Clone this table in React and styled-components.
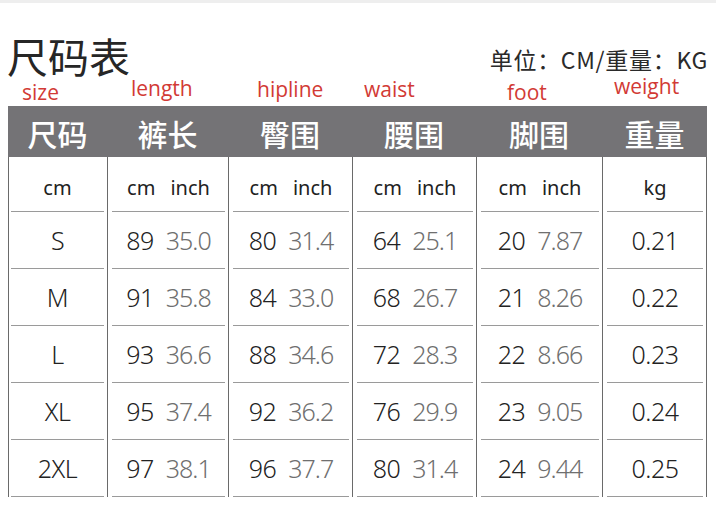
import React from "react";
import styled, { createGlobalStyle } from "styled-components";

const COLS = "99px 121px 124px 124px 126px 105px";

const heads = ["尺码", "裤长", "臀围", "腰围", "脚围", "重量"];

// label text, left padding inside its column, offset from row top
const labels = [
  { text: "size", left: 14, top: 6 },
  { text: "length", left: 24, top: 2 },
  { text: "hipline", left: 29, top: 3 },
  { text: "waist", left: 12, top: 3 },
  { text: "foot", left: 31, top: 6 },
  { text: "weight", left: 12, top: 0 },
];

const rows = [
  ["S", [89, "35.0"], [80, "31.4"], [64, "25.1"], [20, "7.87"], "0.21"],
  ["M", [91, "35.8"], [84, "33.0"], [68, "26.7"], [21, "8.26"], "0.22"],
  ["L", [93, "36.6"], [88, "34.6"], [72, "28.3"], [22, "8.66"], "0.23"],
  ["XL", [95, "37.4"], [92, "36.2"], [76, "29.9"], [23, "9.05"], "0.24"],
  ["2XL", [97, "38.1"], [96, "37.7"], [80, "31.4"], [24, "9.44"], "0.25"],
];

function App() {
  return (
    <>
      <GlobalStyle />
      <Page>
        <TopBand />
        <TitleRow>
          <Title>尺码表</Title>
          <Unit>单位：CM/重量：KG</Unit>
        </TitleRow>
        <LabelRow>
          {labels.map((l) => (
            <Label key={l.text} $left={l.left} $top={l.top}>
              {l.text}
            </Label>
          ))}
        </LabelRow>
        <HeadBar>
          {heads.map((h) => (
            <HeadCell key={h}>{h}</HeadCell>
          ))}
        </HeadBar>
        <Body>
          {[0, 1, 2, 3, 4, 5].map((c) => (
            <Column key={c} $last={c === 5}>
              <Cell $first={c === 0} $sub>
                {c === 0 ? (
                  <SubHead>cm</SubHead>
                ) : c === 5 ? (
                  <SubHead>kg</SubHead>
                ) : (
                  <Pair $gap={15}>
                    <SubHead>cm</SubHead>
                    <SubHead>inch</SubHead>
                  </Pair>
                )}
              </Cell>
              {rows.map((r, i) => {
                const v = r[c];
                return (
                  <Cell key={i} $first={c === 0}>
                    {Array.isArray(v) ? (
                      <Pair $gap={12}>
                        <Num>{v[0]}</Num>
                        <Inch>{v[1]}</Inch>
                      </Pair>
                    ) : (
                      <Num>{v}</Num>
                    )}
                  </Cell>
                );
              })}
            </Column>
          ))}
        </Body>
      </Page>
    </>
  );
}

export default App;

const GlobalStyle = createGlobalStyle`
  body {
    margin: 0;
    background: #ffffff;
    font-family: "Noto Sans", "Noto Sans CJK SC", sans-serif;
  }
`;

const Page = styled.div`
  width: 716px;
  height: 510px;
  overflow: hidden;
  background: #fff;
`;

const TopBand = styled.div`
  height: 3px;
  background: #eeeeee;
`;

const TitleRow = styled.div`
  display: flex;
  justify-content: space-between;
  align-items: flex-end;
  padding: 0 8px 0 8px;
  margin-top: 31px;
  height: 42px;
`;

const Title = styled.div`
  font-family: "Noto Sans CJK SC", sans-serif;
  font-size: 41px;
  line-height: 42px;
  color: #262626;
  margin-left: -1px;
`;

const Unit = styled.div`
  font-family: "Noto Sans CJK SC", sans-serif;
  font-size: 23px;
  line-height: 24px;
  letter-spacing: 0.7px;
  color: #2a2a2a;
  margin-bottom: 5px;
`;

const LabelRow = styled.div`
  display: grid;
  grid-template-columns: ${COLS};
  margin: 0 9px 0 8px;
  height: 30px;
`;

const Label = styled.div`
  font-family: "Open Sans", sans-serif;
  font-size: 21px;
  line-height: 21px;
  color: #d23a35;
  padding-left: ${(p) => p.$left}px;
  margin-top: ${(p) => p.$top}px;
`;

const HeadBar = styled.div`
  display: grid;
  grid-template-columns: ${COLS};
  margin: 0 9px 0 8px;
  height: 51px;
  background: #747376;
`;

const HeadCell = styled.div`
  display: flex;
  align-items: center;
  justify-content: center;
  font-family: "Noto Sans CJK SC", sans-serif;
  font-weight: 500;
  font-size: 30px;
  color: #ffffff;
  padding-top: 2px;
`;

const Body = styled.div`
  display: grid;
  grid-template-columns: ${COLS};
  margin: 0 9px 0 8px;
`;

const Column = styled.div`
  display: flex;
  flex-direction: column;
  border-left: 1px solid #6a6a6a;
  border-right: ${(p) => (p.$last ? "1px solid #6a6a6a" : "none")};
`;

const Cell = styled.div`
  height: ${(p) => (p.$sub ? 55 : 57)}px;
  margin: 0 3px 0 ${(p) => (p.$first ? 2 : 4)}px;
  border-bottom: 1px solid #9a9a9a;
  box-sizing: border-box;
  display: flex;
  align-items: center;
  justify-content: center;
  padding-top: ${(p) => (p.$sub ? 6 : 0)}px;
`;

const Pair = styled.div`
  display: flex;
  align-items: baseline;
  gap: ${(p) => p.$gap}px;
`;

const SubHead = styled.span`
  font-size: 20px;
  font-weight: 400;
  color: #222;
`;

const Num = styled.span`
  font-size: 25px;
  font-weight: 350;
  color: #222;
  letter-spacing: -0.5px;
`;

const Inch = styled.span`
  font-size: 25px;
  font-weight: 300;
  color: #6f6f6f;
  letter-spacing: -1px;
`;
